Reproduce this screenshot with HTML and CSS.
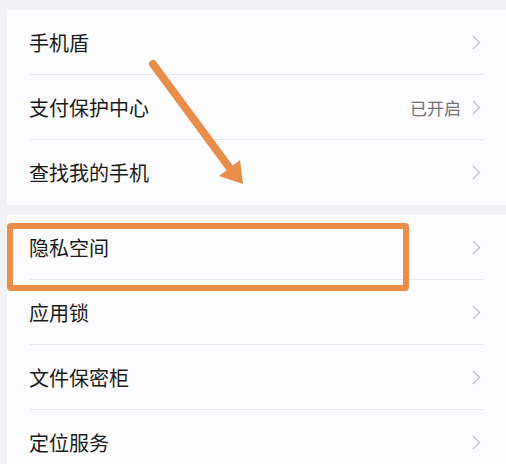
FILE: index.html
```html
<!DOCTYPE html>
<html lang="zh">
<head>
<meta charset="utf-8">
<link rel="stylesheet" href="styles.css">
</head>
<body>
<div class="page">
  <div class="group">
    <div class="row"><span class="label">手机盾</span><span class="right"><svg class="chev" viewBox="0 0 9 15"><path d="M1 1 L7.5 7.5 L1 14"/></svg></span></div>
    <div class="row"><span class="label">支付保护中心</span><span class="right"><span class="value">已开启</span><svg class="chev" viewBox="0 0 9 15"><path d="M1 1 L7.5 7.5 L1 14"/></svg></span></div>
    <div class="row"><span class="label">查找我的手机</span><span class="right"><svg class="chev" viewBox="0 0 9 15"><path d="M1 1 L7.5 7.5 L1 14"/></svg></span></div>
  </div>
  <div class="group">
    <div class="row"><span class="label">隐私空间</span><span class="right"><svg class="chev" viewBox="0 0 9 15"><path d="M1 1 L7.5 7.5 L1 14"/></svg></span></div>
    <div class="row"><span class="label">应用锁</span><span class="right"><svg class="chev" viewBox="0 0 9 15"><path d="M1 1 L7.5 7.5 L1 14"/></svg></span></div>
    <div class="row"><span class="label">文件保密柜</span><span class="right"><svg class="chev" viewBox="0 0 9 15"><path d="M1 1 L7.5 7.5 L1 14"/></svg></span></div>
    <div class="row"><span class="label">定位服务</span><span class="right"><svg class="chev" viewBox="0 0 9 15"><path d="M1 1 L7.5 7.5 L1 14"/></svg></span></div>
  </div>
  <div class="highlight"></div>
  <svg class="arrow" viewBox="0 0 506 464">
    <line x1="153" y1="64" x2="229" y2="167" />
    <polygon points="243,184 219,176 240,160" />
  </svg>
</div>
</body>
</html>
```

FILE: styles.css
```css
html, body {
  margin: 0;
  padding: 0;
}
body {
  background: #f2f2f4;
  font-family: "Noto Sans CJK SC", "Noto Sans", sans-serif;
  width: 506px;
  height: 464px;
  overflow: hidden;
}
.page {
  position: relative;
  padding-top: 10px;
}
.group {
  margin-left: 7px;
  margin-bottom: 10px;
  background: #fcfbfd;
}
.row {
  height: 64px;
  margin: 0 23px;
  border-bottom: 1px solid #e9e9eb;
  display: flex;
  align-items: center;
  justify-content: space-between;
}
.row:last-child {
  border-bottom: none;
  height: 65px;
}
.label {
  font-size: 20px;
  color: #1b1b1b;
  margin-left: -1px;
}
.right {
  display: flex;
  align-items: center;
  gap: 11px;
  margin-right: 2px;
}
.value {
  font-size: 17px;
  color: #757575;
}
.chev {
  width: 9px;
  height: 15px;
  fill: none;
  stroke: #c4c4c8;
  stroke-width: 1.4;
}
.highlight {
  position: absolute;
  left: 7px;
  top: 223px;
  width: 390px;
  height: 56px;
  border: 6px solid #e88e4a;
  border-radius: 4px;
}
.arrow {
  position: absolute;
  left: 0;
  top: 0;
  width: 506px;
  height: 464px;
}
.arrow line {
  stroke: #e88e4a;
  stroke-width: 8;
  stroke-linecap: round;
}
.arrow polygon {
  fill: #e88e4a;
}
```
